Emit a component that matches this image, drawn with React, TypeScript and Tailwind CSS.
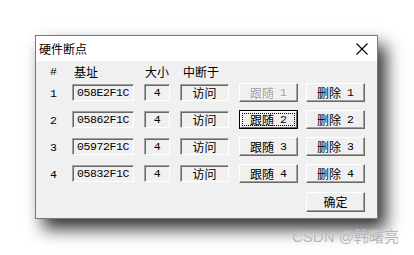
import React from 'react';

const cjk = "font-['Noto_Sans_CJK_SC',sans-serif]";
const mono = "font-['Liberation_Mono','Noto_Sans_CJK_SC',monospace]";

const rows = [
  { n: '1', addr: '058E2F1C', disabled: true },
  { n: '2', addr: '05862F1C', focused: true },
  { n: '3', addr: '05972F1C' },
  { n: '4', addr: '05832F1C' },
];

const Field = ({ text, w, cn = false }: { text: string; w: string; cn?: boolean }) => (
  <div
    className={`${w} h-[17px] mt-[1px] flex items-center justify-center border border-t-[#a0a0a0] border-l-[#a0a0a0] border-r-white border-b-white shadow-[inset_1px_1px_0_#696969] bg-[#f0f0f0] text-black leading-none ${
      cn ? `${cjk} text-[12px]` : `${mono} text-[11.5px] tracking-[-0.4px]`
    }`}
  >
    {text}
  </div>
);

const Btn = ({
  label,
  num,
  disabled = false,
  focused = false,
}: {
  label: string;
  num?: string;
  disabled?: boolean;
  focused?: boolean;
}) => {
  const text = (
    <span
      className={`flex items-center gap-[6px] leading-none ${
        disabled ? 'text-[#a0a0a0] [text-shadow:1px_1px_0_#ffffff]' : 'text-black'
      }`}
    >
      <span className={`${cjk} text-[12px]`}>{label}</span>
      {num && <span className={`${mono} text-[11.5px]`}>{num}</span>}
    </span>
  );
  if (focused) {
    return (
      <div className="w-[59px] h-[19px] border border-black bg-[#f0f0f0]">
        <div className="w-full h-full border border-t-white border-l-white border-r-[#696969] border-b-[#696969] p-[1px]">
          <div className="w-full h-full border border-dotted border-black flex items-center justify-center">
            {text}
          </div>
        </div>
      </div>
    );
  }
  return (
    <div className="w-[59px] h-[19px] flex items-center justify-center border border-t-white border-l-white border-r-[#696969] border-b-[#696969] shadow-[inset_-1px_-1px_0_#a0a0a0] bg-[#f0f0f0]">
      {text}
    </div>
  );
};

export default function App() {
  return (
    <div className="relative w-[414px] h-[255px] bg-white overflow-hidden pl-[35px] pt-[35px]">
      <div className="w-[343px] border border-[#7a7a7a] bg-[#f0f0f0] shadow-[8px_10px_16px_rgba(0,0,0,0.8)]">
        {/* title bar */}
        <div className="h-[25px] bg-white flex items-center justify-between pl-[3px] pr-[9px]">
          <span className={`${cjk} text-[12px] text-black leading-none`}>硬件断点</span>
          <svg width="12" height="12" viewBox="0 0 12 12" className="text-black">
            <path d="M0.5 0.5 L11.5 11.5 M11.5 0.5 L0.5 11.5" stroke="currentColor" strokeWidth="1.1" />
          </svg>
        </div>

        {/* body */}
        <div className="pl-[14px] pb-[6px]">
          <div className="h-[22px] flex items-center text-[12px] text-black leading-none">
            <span className={`w-[22px] ${mono} text-[11.5px]`}>#</span>
            <span className={`w-[62px] pl-[2px] ${cjk}`}>基址</span>
            <span className={`w-[26px] ml-[10px] pl-[1px] ${cjk}`}>大小</span>
            <span className={`w-[49px] ml-[10px] pl-[3px] ${cjk}`}>中断于</span>
          </div>

          {rows.map((r) => (
            <div key={r.n} className="h-[27px] flex items-start">
              <span className={`w-[22px] h-[19px] flex items-center pt-[3px] ${mono} text-[11.5px] text-black`}>
                {r.n}
              </span>
              <Field text={r.addr} w="w-[62px]" />
              <div className="ml-[10px]">
                <Field text="4" w="w-[26px]" />
              </div>
              <div className="ml-[10px]">
                <Field text="访问" w="w-[49px]" cn />
              </div>
              <div className="ml-[10px]">
                <Btn label="跟随" num={r.n} disabled={r.disabled} focused={r.focused} />
              </div>
              <div className="ml-[8px]">
                <Btn label="删除" num={r.n} />
              </div>
            </div>
          ))}

          <div className="mt-[1px] flex justify-end pr-[12px]">
            <div className="h-[20px] w-[59px] flex items-center justify-center border border-t-white border-l-white border-r-[#696969] border-b-[#696969] shadow-[inset_-1px_-1px_0_#a0a0a0] bg-[#f0f0f0]">
              <span className={`${cjk} text-[12px] text-black leading-none`}>确定</span>
            </div>
          </div>
        </div>
      </div>

      <span className="absolute left-[292px] top-[229px] font-['Liberation_Sans','Noto_Sans_CJK_SC',sans-serif] text-[15px] text-[#b4b4b4] leading-none [text-shadow:0_0_1px_#ffffff]">
        CSDN @韩曙亮
      </span>
    </div>
  );
}
